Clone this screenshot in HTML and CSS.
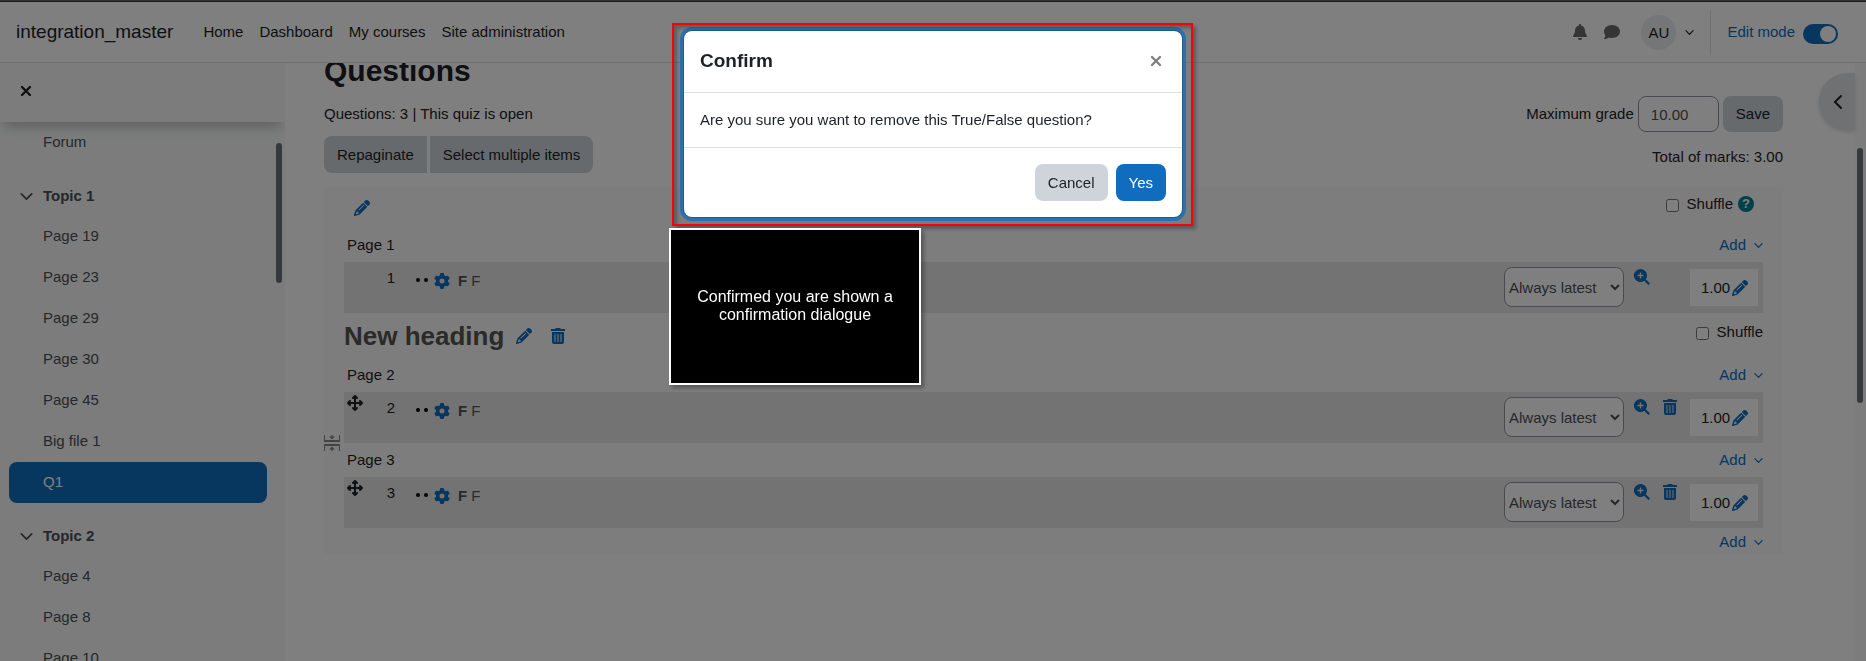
FILE: index.html
```html
<!DOCTYPE html>
<html lang="en">

<head>
    <meta charset="utf-8">
    <meta name="viewport" content="width=device-width, initial-scale=1.0">
    <title>Questions</title>
    <link rel="stylesheet" href="styles.css">
</head>

<body>
    <!-- shared icons -->
    <svg class="sprite" aria-hidden="true">
        <symbol id="i-bell" viewBox="0 0 448 512">
            <path d="M224 0c-17.700 0-32 14.300-32 32V51.200C119 66 64 130.600 64 208v18.800c0 47-17.300 92.400-48.500 127.600l-7.400 8.300c-8.400 9.400-10.400 22.900-5.300 34.400S19.400 416 32 416H416c12.600 0 24-7.400 29.200-18.900s3.100-25-5.300-34.400l-7.400-8.300C401.300 319.200 384 273.900 384 226.800V208c0-77.400-55-142-128-156.800V32c0-17.700-14.300-32-32-32zm45.300 493.300c12-12 18.700-28.300 18.700-45.300H224 160c0 17 6.700 33.300 18.700 45.300s28.300 18.700 45.300 18.700s33.300-6.700 45.300-18.700z" />
        </symbol>
        <symbol id="i-comment" viewBox="0 0 512 512">
            <path d="M512 240c0 114.900-114.600 208-256 208c-37.100 0-72.300-6.400-104.100-17.900c-11.900 8.700-31.300 20.600-54.300 30.600C73.600 471.100 44.700 480 16 480c-6.500 0-12.300-3.900-14.800-9.900c-2.500-6-1.100-12.800 3.400-17.400l.3-.3c.3-.3 .7-.7 1.300-1.400c1.100-1.200 2.800-3.100 4.900-5.700c4.100-5 9.600-12.400 15.200-21.600c10-16.600 19.500-38.400 21.400-62.900C17.700 326.800 0 285.100 0 240C0 125.100 114.600 32 256 32s256 93.100 256 208z" />
        </symbol>
        <symbol id="i-pencil" viewBox="0 0 512 512">
            <path d="M410.300 231l11.300-11.300-33.900-33.900-62.100-62.100L291.700 89.800l-11.300 11.300-22.600 22.600L58.600 322.900c-10.400 10.400-18 23.300-22.200 37.400L1 480.700c-2.500 8.400-.2 17.500 6.100 23.700s15.300 8.500 23.700 6.100l120.300-35.400c14.100-4.200 27-11.800 37.400-22.200L387.700 253.700 410.300 231zM160 399.400l-9.100 22.700c-4 3.100-8.500 5.400-13.300 6.900L59.400 452l23-78.100c1.400-4.900 3.800-9.400 6.900-13.300l22.700-9.100v32c0 8.800 7.200 16 16 16h32zM362.700 18.700L348.300 33.200 325.700 55.800 314.300 67.100l33.900 33.900 62.100 62.100 33.900 33.900 11.300-11.300 22.600-22.600 14.500-14.500c25-25 25-65.500 0-90.500L453.300 18.700c-25-25-65.500-25-90.500 0zm-47.400 168l-144 144c-6.200 6.200-16.400 6.200-22.600 0s-6.200-16.400 0-22.600l144-144c6.200-6.200 16.400-6.200 22.600 0s6.200 16.400 0 22.600z" />
        </symbol>
        <symbol id="i-gear" viewBox="0 0 512 512">
            <path d="M495.900 166.600c3.200 8.700 .5 18.400-6.400 24.600l-43.300 39.400c1.100 8.300 1.700 16.800 1.700 25.400s-.6 17.100-1.700 25.400l43.300 39.400c6.900 6.200 9.600 15.900 6.400 24.600c-4.400 11.900-9.700 23.300-15.800 34.300l-4.700 8.100c-6.600 11-14 21.400-22.100 31.200c-5.900 7.200-15.700 9.600-24.500 6.800l-55.700-17.700c-13.400 10.300-28.200 18.900-44 25.400l-12.500 57.100c-2 9.100-9 16.300-18.200 17.800c-13.800 2.300-28 3.500-42.500 3.500s-28.700-1.200-42.500-3.500c-9.200-1.500-16.200-8.700-18.200-17.800l-12.500-57.100c-15.800-6.500-30.600-15.100-44-25.400L83.100 425.900c-8.800 2.800-18.600 .3-24.500-6.800c-8.100-9.800-15.500-20.200-22.100-31.200l-4.700-8.100c-6.100-11-11.400-22.400-15.800-34.300c-3.200-8.700-.5-18.400 6.400-24.600l43.300-39.400C64.600 273.100 64 264.600 64 256s.6-17.100 1.700-25.400L22.400 191.200c-6.900-6.200-9.600-15.900-6.400-24.600c4.400-11.900 9.700-23.300 15.800-34.300l4.700-8.100c6.600-11 14-21.400 22.100-31.200c5.900-7.200 15.700-9.600 24.500-6.800l55.700 17.700c13.400-10.300 28.200-18.900 44-25.400l12.500-57.100c2-9.100 9-16.300 18.200-17.800C227.300 1.200 241.500 0 256 0s28.700 1.200 42.500 3.500c9.200 1.500 16.200 8.700 18.200 17.800l12.500 57.100c15.800 6.500 30.600 15.100 44 25.400l55.700-17.700c8.800-2.800 18.600-.3 24.500 6.800c8.100 9.800 15.500 20.200 22.100 31.200l4.700 8.100c6.100 11 11.400 22.400 15.800 34.300zM256 336a80 80 0 1 0 0-160 80 80 0 1 0 0 160z" />
        </symbol>
        <symbol id="i-trash" viewBox="0 0 16 16">
            <path fill-rule="evenodd" d="M1 1h4l1-1h4l1 1h4v2H1zM2 4h12v10a2 2 0 0 1-2 2H4a2 2 0 0 1-2-2zM4.500 6v8h1V6zM7.500 6v8h1V6zM10.500 6v8h1V6z" />
        </symbol>
        <symbol id="i-zoom" viewBox="0 0 16 16">
            <path fill-rule="evenodd" d="M6.500 0a6.500 6.500 0 0 1 5.300 10.200l4.200 4.200-1.600 1.600-4.200-4.200A6.500 6.500 0 1 1 6.500 0zM5.800 3.500v2.300H3.500v1.400h2.300v2.300h1.400V7.200h2.300V5.800H7.200V3.500z" />
        </symbol>
        <symbol id="i-move" viewBox="0 0 16 16">
            <path d="M8 1v14M1 8h14M6 3l2-2 2 2M6 13l2 2 2-2M3 6L1 8l2 2M13 6l2 2-2 2" fill="none" stroke="currentColor" stroke-width="2" stroke-linecap="round" stroke-linejoin="round" />
        </symbol>
        <symbol id="i-dots" viewBox="0 0 12 16">
            <circle cx="2" cy="8" r="2" />
            <circle cx="10" cy="8" r="2" />
        </symbol>
        <symbol id="i-join" viewBox="0 0 16 16">
            <path d="M0 0h1v5h14V0h1v7H0zM0 9h16v7h-1v-5H1v5H0zM7.300 0h1.400v1.500H11L8 4.500 5 1.500h2.300zM7.300 16h1.400v-1.500H11l-3-3-3 3h2.300z" />
        </symbol>
        <symbol id="i-down" viewBox="0 0 10 10">
            <path d="M1 3l4 4 4-4" fill="none" stroke="currentColor" stroke-width="1.300" stroke-linecap="round" stroke-linejoin="round" />
        </symbol>
        <symbol id="i-cross" viewBox="0 0 16 16">
            <path d="M4 4l8 8M12 4l-8 8" fill="none" stroke="currentColor" stroke-width="2.400" stroke-linecap="round" />
        </symbol>
    </svg>

    <div class="window-edge"></div>

    <nav class="navbar">
        <a class="brand" href="#">integration_master</a>
        <a class="nav-link" href="#">Home</a>
        <a class="nav-link" href="#">Dashboard</a>
        <a class="nav-link" href="#">My courses</a>
        <a class="nav-link" href="#">Site administration</a>
        <div class="user-area">
            <button class="icon-button" aria-label="Notifications"><svg class="icon"><use href="#i-bell" /></svg></button>
            <button class="icon-button" aria-label="Messages"><svg class="icon"><use href="#i-comment" /></svg></button>
            <button class="user-menu" aria-label="User menu">
                <span class="avatar">AU</span>
                <svg class="caret"><use href="#i-down" /></svg>
            </button>
            <div class="edit-mode">
                <label for="editMode">Edit mode</label>
                <input id="editMode" class="switch" type="checkbox" checked>
            </div>
        </div>
    </nav>

    <div class="page">
        <aside class="drawer">
            <div class="drawer-header">
                <button class="icon-button" aria-label="Close course index"><svg class="icon"><use href="#i-cross" /></svg></button>
            </div>
            <ul class="course-index">
                <li><a href="#">Forum</a></li>
            </ul>
            <h4 class="topic"><svg class="topic-caret"><use href="#i-down" /></svg>Topic 1</h4>
            <ul class="course-index">
                <li><a href="#">Page 19</a></li>
                <li><a href="#">Page 23</a></li>
                <li><a href="#">Page 29</a></li>
                <li><a href="#">Page 30</a></li>
                <li><a href="#">Page 45</a></li>
                <li><a href="#">Big file 1</a></li>
                <li><a class="active" href="#">Q1</a></li>
            </ul>
            <h4 class="topic"><svg class="topic-caret"><use href="#i-down" /></svg>Topic 2</h4>
            <ul class="course-index">
                <li><a href="#">Page 4</a></li>
                <li><a href="#">Page 8</a></li>
                <li><a href="#">Page 10</a></li>
            </ul>
            <div class="drawer-thumb"></div>
        </aside>

        <main class="content">
            <h2>Questions</h2>
            <div class="quiz-controls">
                <div class="quiz-info">
                    <p>Questions: 3 | This quiz is open</p>
                    <div class="btn-group">
                        <button class="btn">Repaginate</button>
                        <button class="btn">Select multiple items</button>
                    </div>
                </div>
                <div class="quiz-grade">
                    <div class="max-grade">
                        <label for="maxGrade">Maximum grade</label>
                        <input id="maxGrade" type="text" value="10.00">
                        <button class="btn">Save</button>
                    </div>
                    <p>Total of marks: 3.00</p>
                </div>
            </div>

            <div class="quiz-structure">
                <div class="section section-first">
                    <a href="#" aria-label="Edit heading"><svg class="icon"><use href="#i-pencil" /></svg></a>
                    <div class="shuffle">
                        <input id="shuffle1" type="checkbox">
                        <label for="shuffle1">Shuffle</label>
                        <button class="help" aria-label="Help with Shuffle">?</button>
                    </div>
                </div>

                <div class="page-row">
                    <span>Page 1</span>
                    <a href="#">Add <svg class="caret"><use href="#i-down" /></svg></a>
                </div>
                <div class="question">
                    <span class="move"></span>
                    <span class="number">1</span>
                    <svg class="dots"><use href="#i-dots" /></svg>
                    <a class="q-link" href="#"><svg class="icon"><use href="#i-gear" /></svg><span><b>F</b> F</span></a>
                    <select aria-label="Question 1 version">
                        <option>Always latest</option>
                    </select>
                    <a class="action" href="#" aria-label="Preview question"><svg class="icon"><use href="#i-zoom" /></svg></a>
                    <span class="action"></span>
                    <div class="mark">1.00<a href="#" aria-label="Edit mark"><svg class="icon"><use href="#i-pencil" /></svg></a></div>
                </div>

                <div class="section">
                    <h3>New heading</h3>
                    <a href="#" aria-label="Edit heading"><svg class="icon"><use href="#i-pencil" /></svg></a>
                    <a href="#" aria-label="Remove heading"><svg class="icon"><use href="#i-trash" /></svg></a>
                    <div class="shuffle">
                        <input id="shuffle2" type="checkbox">
                        <label for="shuffle2">Shuffle</label>
                    </div>
                </div>

                <div class="page-row">
                    <span>Page 2</span>
                    <a href="#">Add <svg class="caret"><use href="#i-down" /></svg></a>
                </div>
                <div class="question">
                    <span class="move"><svg class="icon"><use href="#i-move" /></svg></span>
                    <span class="number">2</span>
                    <svg class="dots"><use href="#i-dots" /></svg>
                    <a class="q-link" href="#"><svg class="icon"><use href="#i-gear" /></svg><span><b>F</b> F</span></a>
                    <select aria-label="Question 2 version">
                        <option>Always latest</option>
                    </select>
                    <a class="action" href="#" aria-label="Preview question"><svg class="icon"><use href="#i-zoom" /></svg></a>
                    <a class="action" href="#" aria-label="Delete question"><svg class="icon"><use href="#i-trash" /></svg></a>
                    <div class="mark">1.00<a href="#" aria-label="Edit mark"><svg class="icon"><use href="#i-pencil" /></svg></a></div>
                    <a class="join" href="#" aria-label="Remove page break"><svg class="icon"><use href="#i-join" /></svg></a>
                </div>

                <div class="page-row">
                    <span>Page 3</span>
                    <a href="#">Add <svg class="caret"><use href="#i-down" /></svg></a>
                </div>
                <div class="question">
                    <span class="move"><svg class="icon"><use href="#i-move" /></svg></span>
                    <span class="number">3</span>
                    <svg class="dots"><use href="#i-dots" /></svg>
                    <a class="q-link" href="#"><svg class="icon"><use href="#i-gear" /></svg><span><b>F</b> F</span></a>
                    <select aria-label="Question 3 version">
                        <option>Always latest</option>
                    </select>
                    <a class="action" href="#" aria-label="Preview question"><svg class="icon"><use href="#i-zoom" /></svg></a>
                    <a class="action" href="#" aria-label="Delete question"><svg class="icon"><use href="#i-trash" /></svg></a>
                    <div class="mark">1.00<a href="#" aria-label="Edit mark"><svg class="icon"><use href="#i-pencil" /></svg></a></div>
                </div>

                <div class="page-row last">
                    <a href="#">Add <svg class="caret"><use href="#i-down" /></svg></a>
                </div>
            </div>
        </main>

        <div class="page-scroll">
            <div class="page-thumb"></div>
        </div>
        <button class="blocks-toggle" aria-label="Open block drawer">
            <svg class="icon" viewBox="0 0 16 16"><path d="M11 2L5 8l6 6" fill="none" stroke="currentColor" stroke-width="2" stroke-linecap="round" /></svg>
        </button>
    </div>

    <div class="backdrop">
        <div class="modal" role="dialog" aria-labelledby="modalTitle">
            <div class="modal-header">
                <h5 id="modalTitle">Confirm</h5>
                <button class="close" aria-label="Close"><svg class="icon"><use href="#i-cross" /></svg></button>
            </div>
            <div class="modal-body">Are you sure you want to remove this True/False question?</div>
            <div class="modal-footer">
                <button class="btn">Cancel</button>
                <button class="btn btn-primary">Yes</button>
            </div>
            <div class="highlight"></div>
            <div class="callout">Confirmed you are shown a confirmation dialogue</div>
        </div>
    </div>
</body>

</html>
```
FILE: styles.css
```css
* {
    box-sizing: border-box;
}

body {
    display: flex;
    flex-direction: column;
    height: 100vh;
    margin: 0;
    overflow: hidden;
    font-family: "Liberation Sans", Arial, sans-serif;
    font-size: 15px;
    line-height: 22px;
    color: #1d2125;
    background-color: #fff;
}

h2,
h3,
h4,
h5,
p,
ul {
    margin: 0;
    padding: 0;
}

a {
    color: #0f6cbf;
    text-decoration: none;
}

button,
input,
select {
    font: inherit;
    color: inherit;
}

button {
    padding: 0;
    border: none;
    background: none;
    cursor: pointer;
}

.sprite {
    position: absolute;
    width: 0;
    height: 0;
}

.icon {
    display: block;
    width: 16px;
    height: 16px;
    fill: currentColor;
}

.caret {
    width: 9px;
    height: 9px;
}

.window-edge {
    position: relative;
    z-index: 20;
    flex: none;
    height: 2px;
    background-color: #333;
    border-bottom: 1px solid #1a1a1a;
}

/* navbar */
.navbar {
    display: flex;
    flex: none;
    align-items: center;
    gap: 16px;
    height: 61px;
    padding: 0 28px 0 16px;
    background-color: #fff;
    border-bottom: 1px solid #dee2e6;
    position: relative;
    z-index: 2;
}

.brand {
    margin-right: 14px;
    font-size: 19px;
    color: #1d2125;
}

.nav-link {
    color: #1d2125;
}

.user-area {
    display: flex;
    align-items: center;
    gap: 16px;
    margin-left: auto;
}

.user-area .icon-button {
    color: #6a6a6a;
}

.user-menu {
    display: flex;
    align-items: center;
    gap: 9px;
    margin-left: 5px;
}

.avatar {
    width: 35px;
    height: 35px;
    border-radius: 50%;
    line-height: 35px;
    background-color: #e9ecef;
}

.edit-mode {
    display: flex;
    align-items: center;
    gap: 8px;
    height: 45px;
    padding-left: 16px;
    border-left: 1px solid #dee2e6;
    color: #0f6cbf;
}

.switch {
    appearance: none;
    width: 35px;
    height: 20px;
    margin: 4px 0 0;
    padding: 2px;
    border-radius: 10px;
    background-color: #0f6cbf;
}

.switch::before {
    content: "";
    display: block;
    width: 16px;
    height: 16px;
    margin-left: auto;
    border-radius: 50%;
    background-color: #fff;
}

/* course index */
.page {
    display: flex;
    flex: 1;
    min-height: 0;
    position: relative;
}

.drawer {
    flex: none;
    width: 285px;
    overflow: hidden;
    position: relative;
    background-color: #f8f9fa;
}

.drawer-header {
    height: 59px;
    padding: 20px 18px;
    box-shadow: 0 8px 12px -4px rgba(0, 0, 0, 0.25);
}

.course-index {
    padding: 0 18px 0 9px;
    list-style: none;
}

.course-index a {
    display: block;
    padding: 9px 34px 10px;
    border-radius: 8px;
    color: #495057;
}

.course-index a.active {
    color: #fff;
    background-color: #0f6cbf;
}

.topic {
    display: flex;
    align-items: center;
    gap: 10px;
    height: 40px;
    margin-top: 13px;
    padding-left: 20px;
    font-size: 15px;
    color: #495057;
}

.topic-caret {
    width: 13px;
    height: 13px;
}

.drawer-thumb {
    position: absolute;
    top: 80px;
    right: 3px;
    width: 6px;
    height: 140px;
    border-radius: 3px;
    background-color: #6a737b;
}

/* questions */
.content {
    flex: 1;
    overflow: hidden;
    padding: 0 71px 0 39px;
}

.content h2 {
    margin: -10px 0 7px;
    font-size: 30px;
    line-height: 36px;
}

.quiz-controls {
    display: flex;
    justify-content: space-between;
    margin-bottom: 14px;
}

.quiz-info {
    display: flex;
    flex-direction: column;
    gap: 11px;
    padding-top: 7px;
}

.quiz-grade {
    display: flex;
    flex-direction: column;
    align-items: flex-end;
    gap: 14px;
}

.max-grade {
    display: flex;
    align-items: center;
    gap: 4px;
}

.max-grade input {
    width: 81px;
    height: 36px;
    padding: 0 12px;
    border: 1px solid #8f959e;
    border-radius: 8px;
    color: #495057;
    background-color: #fff;
}

.btn {
    height: 37px;
    padding: 0 13px;
    border-radius: 8px;
    color: #1d2125;
    background-color: #ced4da;
}

.max-grade .btn {
    height: 36px;
}

.btn-primary {
    color: #fff;
    background-color: #0f6cbf;
}

.btn-group {
    display: flex;
    gap: 3px;
}

.btn-group .btn:first-child {
    border-radius: 8px 0 0 8px;
}

.btn-group .btn:last-child {
    border-radius: 0 8px 8px 0;
}

.quiz-structure {
    padding: 0 20px;
    background-color: #fafafa;
}

.section {
    display: flex;
    align-items: center;
    gap: 18px;
    height: 45px;
}

.section-first {
    height: 41px;
    padding: 0 9px 0 10px;
}

.section h3 {
    margin-right: -6px;
    font-size: 26px;
    line-height: 32px;
    color: #555;
}

.shuffle {
    display: flex;
    align-items: center;
    margin-left: auto;
    padding-bottom: 8px;
}

.shuffle input {
    width: 13px;
    height: 13px;
    margin: 3px 8px 0 0;
}

.help {
    width: 16px;
    height: 16px;
    margin-left: 5px;
    border-radius: 50%;
    font-size: 13px;
    font-weight: bold;
    line-height: 16px;
    color: #fff;
    background-color: #008196;
}

.page-row {
    display: flex;
    justify-content: space-between;
    padding: 6px 0 6px 3px;
}

.page-row a {
    display: flex;
    align-items: center;
    gap: 8px;
}

.page-row.last {
    justify-content: flex-end;
    padding: 3px 0 1px;
}

.question {
    display: flex;
    align-items: flex-start;
    height: 51px;
    padding: 0 5px 0 3px;
    position: relative;
    background-color: #e6e6e6;
}

.move {
    width: 16px;
    margin-top: 3px;
    color: #1d2125;
}

.number {
    width: 32px;
    margin-top: 5px;
    text-align: right;
}

.dots {
    width: 12px;
    height: 16px;
    margin: 10px 6px 0 21px;
    fill: #000;
}

.q-link {
    display: flex;
    align-items: center;
    gap: 8px;
    margin: 8px auto 0 0;
}

.q-link span {
    color: #555;
}

.question select {
    width: 120px;
    height: 40px;
    margin: 5px 10px 0 0;
    padding: 0;
    border: 1px solid #8f959e;
    border-radius: 8px;
    color: #495057;
    background-color: #fff;
}

.action {
    width: 17px;
    margin: 7px 11px 0 0;
}

.mark {
    display: flex;
    align-items: center;
    gap: 2px;
    height: 37px;
    width: 68px;
    margin-top: 7px;
    padding-left: 11px;
    background-color: #fff;
}

.join {
    position: absolute;
    top: 43px;
    left: -20px;
    color: #888;
}

/* right edge */
.page-scroll {
    flex: none;
    width: 12px;
    padding: 85px 3px 0;
    background-color: #f8f9fa;
}

.page-thumb {
    height: 255px;
    border-radius: 3px;
    background-color: #6a737b;
}

.blocks-toggle {
    display: flex;
    align-items: center;
    position: absolute;
    top: 10px;
    right: 11px;
    width: 36px;
    height: 57px;
    padding-left: 11px;
    border-radius: 29px 0 0 29px;
    background-color: #dee2e6;
    box-shadow: 0 2px 4px rgba(0, 0, 0, 0.15);
}

/* confirm dialogue */
.backdrop {
    position: fixed;
    inset: 0;
    z-index: 10;
    padding-top: 30px;
    background-color: rgba(0, 0, 0, 0.5);
}

.modal {
    width: 500px;
    margin: 0 auto;
    position: relative;
    border: 1px solid rgba(0, 0, 0, 0.2);
    border-radius: 9px;
    background-color: #fff;
    background-clip: padding-box;
    box-shadow: 0 0 0 3px rgba(15, 108, 191, 0.75);
}

.modal-header {
    display: flex;
    align-items: center;
    justify-content: space-between;
    height: 62px;
    padding: 0 16px 2px;
    border-bottom: 1px solid #dee2e6;
}

.modal-header h5 {
    font-size: 19px;
    line-height: 28px;
}

.close {
    margin-right: 2px;
    color: #808080;
}

.modal-body {
    padding: 16px;
}

.modal-footer {
    display: flex;
    justify-content: flex-end;
    gap: 8px;
    padding: 16px;
    border-top: 1px solid #dee2e6;
}

.highlight {
    position: absolute;
    inset: -8px -11px -9px -12px;
    border: 2px solid #f00;
    box-shadow: 3px 3px 4px rgba(0, 0, 0, 0.3), inset 3px 3px 4px rgba(0, 0, 0, 0.3);
    pointer-events: none;
}

.callout {
    display: flex;
    align-items: center;
    position: absolute;
    top: 197px;
    left: -15px;
    width: 252px;
    height: 157px;
    padding: 0 20px 2px;
    border: 2px solid #fff;
    font-size: 16px;
    line-height: 18px;
    text-align: center;
    color: #fff;
    background-color: #000;
    box-shadow: 3px 3px 4px rgba(0, 0, 0, 0.3);
}
```
